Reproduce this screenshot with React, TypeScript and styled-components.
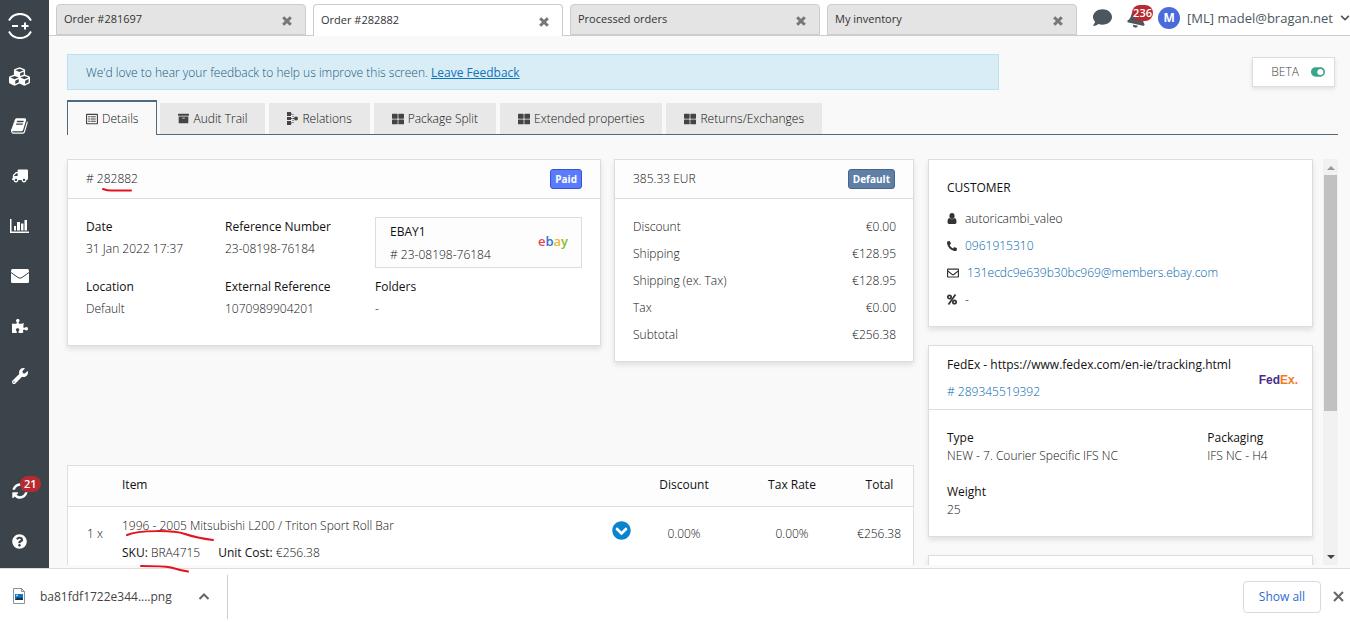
import React from "react";
import styled, { createGlobalStyle, css } from "styled-components";
import {
  FaArchive,
  FaBell,
  FaChevronCircleDown,
  FaChevronDown,
  FaComment,
  FaCubes,
  FaPhoneAlt,
  FaPuzzlePiece,
  FaQuestionCircle,
  FaRegEnvelope,
  FaRegListAlt,
  FaThLarge,
  FaToggleOn,
  FaTruck,
  FaWrench,
} from "react-icons/fa";

const GlobalStyle = createGlobalStyle`
  *, *::before, *::after { box-sizing: border-box; }
  body {
    margin: 0;
    background: #f9f9f9;
    color: #111;
    font: 300 12px/18px "Open Sans", "Noto Sans", sans-serif;
  }
  button { font: inherit; color: inherit; background: none; border: 0; padding: 0; cursor: pointer; }
  a { color: #0063ad; text-decoration: none; }
  svg { display: block; flex: none; }
`;

/* ---------- page frame ---------- */

const Page = styled.div`
  display: flex;
  flex-direction: column;
  height: 100vh;
  overflow: hidden;
`;

const Workspace = styled.div`
  display: flex;
  flex: 1;
  min-height: 0;
`;

const Sidebar = styled.nav`
  display: flex;
  flex-direction: column;
  justify-content: space-between;
  align-items: center;
  width: 49px;
  padding: 1px 10px 2px 0;
  background: #3a444a;
  color: #fff;
`;

const SideGroup = styled.div`
  display: flex;
  flex-direction: column;
`;

const SideButton = styled.button`
  position: relative;
  display: flex;
  align-items: center;
  justify-content: center;
  width: 39px;
  height: 50px;
`;

const CountBadge = styled.span`
  position: absolute;
  top: 10px;
  left: 20px;
  padding: 0 4px;
  border-radius: 8px;
  background: #b52b31;
  color: #fff;
  font-size: 11px;
  font-weight: 600;
  line-height: 16px;
`;

const Main = styled.div`
  display: flex;
  flex: 1;
  flex-direction: column;
  min-width: 0;
`;

/* ---------- top bar ---------- */

const TopBar = styled.header`
  display: flex;
  height: 36px;
  padding-left: 7px;
  border-bottom: 1px solid #ccc;
  background: #fff;
`;

const WindowTabs = styled.div`
  display: flex;
  flex: 0 1 1021px;
  gap: 7px;
  min-width: 0;
  padding-top: 4px;
`;

const WindowTab = styled.div<{ $active?: boolean }>`
  display: flex;
  flex: 1;
  align-items: center;
  justify-content: space-between;
  height: ${(p) => (p.$active ? 32 : 31)}px;
  padding: 0 13px 2px 7px;
  border: 1px solid #ccc;
  border-bottom-width: ${(p) => (p.$active ? 0 : 1)}px;
  border-radius: 4px 4px 0 0;
  background: ${(p) => (p.$active ? "#fff" : "#e4e4e4")};
  color: #333;
  font-size: 11px;
  font-weight: 400;
`;

const TabClose = styled.button`
  padding-top: 4px;
  color: #777;
`;

const Account = styled.div`
  display: flex;
  flex: 1;
  align-items: center;
  justify-content: flex-end;
  color: #4c565c;
  font-weight: 400;
`;

const IconButton = styled.button`
  position: relative;
  margin-right: 15px;
`;

const BellBadge = styled(CountBadge)`
  top: -3px;
  left: 5px;
  padding: 0 1px;
`;

const Avatar = styled.span`
  width: 22px;
  height: 22px;
  margin: 0 7px 0 -4px;
  border-radius: 50%;
  background: #4a6bdc;
  color: #fff;
  font-weight: 700;
  line-height: 22px;
  text-align: center;
`;

const AccountMenu = styled.button`
  display: flex;
  align-items: center;
  gap: 7px;
  font-size: 13px;
  white-space: nowrap;
`;

/* ---------- content ---------- */

const Content = styled.main`
  display: flex;
  flex: 1;
  flex-direction: column;
  min-height: 0;
  padding: 18px 12px 3px 18px;
`;

const NoticeRow = styled.div`
  display: flex;
  align-items: center;
  justify-content: space-between;
  padding-right: 3px;
`;

const Notice = styled.p`
  flex: 0 1 932px;
  margin: 0;
  padding: 9px 17px 7px 18px;
  border: 1px solid #bce0ee;
  background: #d9edf7;
  color: #1d5878;

  a { color: #0f74b8; font-weight: 400; text-decoration: underline; }
`;

const BetaSwitch = styled.button`
  display: flex;
  align-items: center;
  gap: 12px;
  height: 30px;
  padding: 0 9px 0 18px;
  border: 1px solid #ddd;
  background: #fff;
  box-shadow: 0 2px 4px rgba(0, 0, 0, 0.1);
  color: #444;

  svg { color: #3da58c; }
`;

const SectionTabs = styled.div`
  display: flex;
  align-items: flex-end;
  gap: 4px;
  height: 35px;
  margin-top: 10px;
  border-bottom: 1px solid #50697c;
`;

const SectionTab = styled.button<{ $active?: boolean }>`
  display: flex;
  align-items: center;
  gap: 4px;
  height: 31px;
  padding: 0 18px;
  background: #e8e8e8;
  white-space: nowrap;

  svg { color: #444; }

  ${(p) =>
    p.$active &&
    css`
      height: 35px;
      margin: 0 -1px -1px 0;
      border: 1px solid #50697c;
      border-top-width: 2px;
      border-bottom: 0;
      background: #f9f9f9;
    `}
`;

const Columns = styled.div`
  display: grid;
  grid-template-columns: minmax(0, 847fr) minmax(0, 410fr);
  grid-template-rows: minmax(0, 1fr);
  gap: 14px;
  flex: 1;
  min-height: 0;
  margin-top: 24px;
`;

const OrderColumn = styled.div`
  min-height: 0;
  margin: 0 -8px;
  padding: 0 8px;
  overflow: hidden;
`;

const SummaryRow = styled.div`
  display: grid;
  grid-template-columns: minmax(0, 534fr) minmax(0, 300fr);
  align-items: start;
  gap: 13px;
  min-height: 306px;
`;

const Card = styled.section`
  border: 1px solid #ddd;
  background: #fff;
  box-shadow: 0 3px 5px rgba(0, 0, 0, 0.1);
`;

const CardHeader = styled.header`
  display: flex;
  align-items: center;
  justify-content: space-between;
  height: 39px;
  padding: 0 18px;
  border-bottom: 1px solid #ddd;
  background: #fdfdfd;
`;

const Tag = styled.span<{ $tone: "paid" | "default" }>`
  padding: 0 4px;
  border: 1px solid ${(p) => (p.$tone === "paid" ? "#3353d8" : "#486488")};
  border-radius: 3px;
  background: ${(p) => (p.$tone === "paid" ? "#5b7cfa" : "#5e7fa6")};
  color: #fff;
  font-size: 10px;
  font-weight: 700;
  line-height: 18px;
`;

const Marked = styled.span`
  position: relative;
`;

const Stroke = styled.svg`
  position: absolute;
  overflow: visible;
  fill: none;
  stroke: #e3131f;
  stroke-width: 2;
  stroke-linecap: round;
  pointer-events: none;
`;

const FactGrid = styled.dl`
  display: grid;
  grid-template-columns: minmax(0, 139fr) minmax(0, 150fr) minmax(0, 207fr);
  row-gap: 9px;
  margin: 0;
  padding: 18px 18px 24px;
`;

const Fact = styled.div`
  dt { font-weight: 400; line-height: 20px; }
  dd { margin: 0; line-height: 24px; }
`;

const Channel = styled.div`
  display: flex;
  align-items: center;
  justify-content: space-between;
  height: 51px;
  padding: 0 13px 0 14px;
  border: 1px solid #ddd;
  background: #fdfdfd;
  line-height: 23px;

  strong { display: block; font-weight: 400; }
`;

const EbayLogo = styled.span`
  padding-bottom: 4px;
  font: 600 13px/18px "Open Sans", sans-serif;
`;

const Ink = styled.span<{ $color: string }>`
  color: ${(p) => p.$color};
`;

const Totals = styled.dl`
  margin: 0;
  padding: 14px 17px 13px 18px;

  div { display: flex; justify-content: space-between; line-height: 27px; }
  dd { margin: 0; }
`;

/* ---------- items ---------- */

const ItemsTable = styled.table`
  width: 100%;
  border: 1px solid #ddd;
  border-spacing: 0;
  background: #fff;
  table-layout: fixed;

  th {
    height: 41px;
    padding: 0 0 2px;
    border-bottom: 1px solid #ddd;
    background: #fdfdfd;
    font-weight: 400;
  }
  th:nth-child(2) { text-align: left; }
  td { height: 90px; padding: 13px 0 0; text-align: center; line-height: 27px; vertical-align: top; }
  td:nth-child(2) { padding-top: 5px; text-align: left; }
  td:last-child { padding-right: 12px; text-align: right; }
`;

const ItemMeta = styled.div`
  display: flex;
  gap: 18px;

  b { font-weight: 400; }
`;

const ExpandButton = styled.button`
  display: block;
  margin-top: 1px;
  color: #0a84cc;
`;

/* ---------- side panel ---------- */

const SidePanel = styled.aside`
  display: grid;
  grid-template-columns: minmax(0, 1fr) 15px;
  grid-template-rows: minmax(0, 1fr);
  gap: 10px;
  min-height: 0;
`;

const SideCards = styled.div`
  display: flex;
  flex-direction: column;
  gap: 18px;
  margin: 0 -8px;
  padding: 0 8px;
  overflow: hidden;
`;

const CustomerCard = styled(Card)`
  flex: none;
  padding: 14px 18px 13px;
  line-height: 27px;

  h2 { margin: 0 0 4px; font-size: 12px; font-weight: 400; }
`;

const ContactLine = styled.div`
  display: flex;
  align-items: center;
  gap: 8px;

  svg { min-width: 10px; color: #333; }
`;

const CourierCard = styled(Card)`
  flex: none;
`;

const CourierHeader = styled.header`
  display: flex;
  align-items: center;
  justify-content: space-between;
  padding: 5px 14px 4px 18px;
  border-bottom: 1px solid #ddd;
  font-weight: 400;
  line-height: 27px;

  a { display: block; font-weight: 300; }
`;

const FedexLogo = styled.span`
  padding-top: 4px;
  font: 700 12px/18px "Liberation Sans", sans-serif;
`;

const CourierFacts = styled.dl`
  display: grid;
  grid-template-columns: 3fr 1fr;
  row-gap: 18px;
  margin: 0;
  padding: 19px 18px 17px;

  dt { font-weight: 400; }
  dd { margin: 0; }
`;

const NextCard = styled(Card)`
  flex: none;
  height: 160px;
`;

const ScrollTrack = styled.div`
  display: flex;
  flex-direction: column;
  align-items: center;
  justify-content: space-between;
  padding: 7px 0 6px;
  background: #f1f1f1;
`;

const ScrollThumb = styled.div`
  width: 13px;
  height: 236px;
  margin-bottom: auto;
  margin-top: 5px;
  background: #c1c1c1;
`;

const ScrollArrow = styled.span<{ $down?: boolean }>`
  border: 4px solid transparent;
  ${(p) => (p.$down ? "border-top-color: #444; border-bottom: 0;" : "border-bottom-color: #999; border-top: 0;")}
`;

/* ---------- download shelf ---------- */

const DownloadShelf = styled.footer`
  position: relative;
  display: flex;
  align-items: center;
  justify-content: space-between;
  height: 54px;
  padding: 2px 6px 0 12px;
  border-top: 1px solid #ddd;
  background: #fff;
  color: #444;
  font-weight: 400;
`;

const DownloadItem = styled.div`
  display: flex;
  align-items: center;
  gap: 14px;
  height: 44px;
  padding-right: 18px;
  border-right: 1px solid #ccc;
`;

const ChevronButton = styled.button`
  margin-left: 13px;
`;

const ShelfActions = styled.div`
  display: flex;
  align-items: center;
  gap: 12px;
`;

const ShowAll = styled.button`
  width: 78px;
  height: 32px;
  border: 1px solid #d8dadd;
  border-radius: 4px;
  color: #2f6bd3;
`;

/* ---------- drawings ---------- */

const Logo = () => (
  <svg width="26" height="26" viewBox="0 0 26 26" fill="none" stroke="#fff" strokeWidth="2">
    <path d="M2 7.500a12.500 12.500 0 0 1 22 0M2 18.500a12.500 12.500 0 0 0 22 0M5 13h6M14.500 13h7M18 9.500v7" />
  </svg>
);

const BookIcon = () => (
  <svg width="18" height="18" viewBox="0 0 1792 1792" fill="currentColor">
    <path d="M1639 478q40 57 18 129l-275 906q-19 64-76.500 107.500t-122.500 43.500h-923q-77 0-148.500-53.500t-99.500-131.500q-24-67-2-127 0-4 3-27t4-37q1-8-3-21.500t-3-19.500q2-11 8-21t16.500-23.500 16.500-23.500q23-38 45-91.500t30-91.500q3-10 .5-30t-.5-28q3-11 17-28t17-23q21-36 42-92t25-90q1-9-2.500-32t.5-28q4-13 22-30.500t22-22.500q19-26 42.500-84.500t27.500-96.500q1-8-3-25.500t-2-26.500q2-8 9-18t18-23 17-21q8-12 16.500-30.500t15-35 16-36 19.500-32 26.500-23.500 36-11.500 47.500 5.500l-1 3q38-9 51-9h761q74 0 114 56t18 130l-274 906q-36 119-71.500 153.500t-128.500 34.500h-869q-27 0-38 15-11 16-1 43 24 70 144 70h923q29 0 56-15.500t35-41.500l300-987q7-22 5-57 38 15 59 43zm-1064 2q-4 13 2 22.500t20 9.500h608q13 0 25.500-9.500t16.500-22.500l21-64q4-13-2-22.500t-20-9.500h-608q-13 0-25.500 9.500t-16.500 22.500zm-83 256q-4 13 2 22.500t20 9.500h608q13 0 25.500-9.500t16.500-22.500l21-64q4-13-2-22.500t-20-9.500h-608q-13 0-25.500 9.500t-16.500 22.500z" />
  </svg>
);

const RefreshIcon = () => (
  <svg width="18" height="18" viewBox="0 0 1792 1792" fill="currentColor">
    <path d="M1639 1056q0 5-1 7-64 268-268 434.500t-478 166.500q-146 0-282.500-55t-243.500-157l-129 129q-19 19-45 19t-45-19-19-45v-448q0-26 19-45t45-19h448q26 0 45 19t19 45-19 45l-137 137q71 66 161 102t187 36q134 0 250-65t186-179q11-17 53-117 8-23 30-23h192q13 0 22.500 9.500t9.500 22.500zm25-800v448q0 26-19 45t-45 19h-448q-26 0-45-19t-19-45 19-45l138-138q-148-137-349-137-134 0-250 65t-186 179q-11 17-53 117-8 23-30 23h-199q-13 0-22.500-9.500t-9.500-22.500v-7q65-268 270-434.500t480-166.500q146 0 284 55.500t245 156.500l130-129q19-19 45-19t45 19 19 45z" />
  </svg>
);

const ChartIcon = () => (
  <svg width="19" height="15" viewBox="0 0 19 15" fill="currentColor">
    <path d="M0 0h1.500v12.500h17.500v1.500H0zM4 7h2v4.500H4zM7 3h3v8.500H7zM11 4.500h2.500v7h-2.500zM14.500 1h2.500v10.500h-2.500z" />
  </svg>
);

const MailIcon = () => (
  <svg width="18" height="14" viewBox="0 0 18 14">
    <rect width="18" height="14" rx="1.500" fill="#fff" />
    <path d="M0 3.500l7 5q2 1.500 4 0L18 3.500" fill="none" stroke="#3a444a" />
  </svg>
);

const CloseIcon = () => (
  <svg width="10" height="10" viewBox="0 0 10 10" stroke="currentColor" strokeWidth="3">
    <path d="M1.200 1.200l7.600 7.600M8.800 1.200l-7.600 7.600" />
  </svg>
);

const UserIcon = () => (
  <svg width="10" height="11" viewBox="0 0 10 11" fill="currentColor">
    <ellipse cx="5" cy="3" rx="2.600" ry="3" />
    <path d="M2.300 5Q5 7.500 7.700 5 9.500 5.500 9.500 9q0 2-1.500 2H2Q.5 11 .5 9q0-3.500 1.800-4z" />
  </svg>
);

const FlippedTruck = styled(FaTruck)`
  transform: scaleX(-1);
`;

const TiltedBell = styled(FaBell)`
  transform: rotate(12deg);
`;

const RelationsIcon = () => (
  <svg width="11" height="13" viewBox="0 0 11 13" fill="currentColor">
    <path d="M0 0h4v4H0zM0 5h4v3H0zM0 9h4v4H0z" />
    <circle cx="9" cy="6.500" r="2" />
    <path d="M4 2h2M4 6.500h4M4 11h2M6 2v9" stroke="currentColor" strokeDasharray="1 1" fill="none" />
  </svg>
);

const PercentIcon = () => (
  <svg width="10" height="11" viewBox="0 0 10 11" fill="none" stroke="currentColor" strokeWidth="1.700">
    <circle cx="2.500" cy="3" r="1.700" />
    <circle cx="7.500" cy="8" r="1.700" />
    <path d="M8.500 .5L1.500 10.500" />
  </svg>
);

const ImageFileIcon = () => (
  <svg width="14" height="17" viewBox="0 0 14 17">
    <path d="M1.500 .5h8l3 3v12h-11z" fill="#fff" stroke="#8a9199" />
    <path d="M9.500 .5v3h3" fill="none" stroke="#8a9199" />
    <path d="M3 6h8v6H3z" fill="#1673b8" />
    <path d="M3 12l3-3 2 1.500 1.500-1.500 1.500 1.500V12z" fill="#10324f" />
    <circle cx="5" cy="7.500" r="1" fill="#9fd8ff" />
  </svg>
);

/* ---------- data ---------- */

const windowTabs = ["Order #281697", "Order #282882", "Processed orders", "My inventory"];

const sections = [
  { label: "Details", icon: <FaRegListAlt size={12} /> },
  { label: "Audit Trail", icon: <FaArchive size={11} /> },
  { label: "Relations", icon: <RelationsIcon /> },
  { label: "Package Split", icon: <FaThLarge size={12} /> },
  { label: "Extended properties", icon: <FaThLarge size={12} /> },
  { label: "Returns/Exchanges", icon: <FaThLarge size={12} /> },
];

const navigation = [
  { label: "Home", icon: <Logo /> },
  { label: "Inventory", icon: <FaCubes size={21} /> },
  { label: "Orders", icon: <BookIcon /> },
  { label: "Shipping", icon: <FlippedTruck size={16} /> },
  { label: "Reports", icon: <ChartIcon /> },
  { label: "Email", icon: <MailIcon /> },
  { label: "Apps", icon: <FaPuzzlePiece size={16} /> },
  { label: "Settings", icon: <FaWrench size={16} /> },
];

const totals = [
  ["Discount", "€0.00"],
  ["Shipping", "€128.95"],
  ["Shipping (ex. Tax)", "€128.95"],
  ["Tax", "€0.00"],
  ["Subtotal", "€256.38"],
];

export default function App() {
  return (
    <Page>
      <GlobalStyle />
      <Workspace>
        <Sidebar>
          <SideGroup>
            {navigation.map((n) => (
              <SideButton key={n.label} aria-label={n.label}>{n.icon}</SideButton>
            ))}
          </SideGroup>
          <SideGroup>
            <SideButton aria-label="Sync">
              <RefreshIcon />
              <CountBadge>21</CountBadge>
            </SideButton>
            <SideButton aria-label="Help"><FaQuestionCircle size={15} /></SideButton>
          </SideGroup>
        </Sidebar>

        <Main>
          <TopBar>
            <WindowTabs>
              {windowTabs.map((t, i) => (
                <WindowTab key={t} $active={i === 1}>
                  {t}
                  <TabClose aria-label={`Close ${t}`}><CloseIcon /></TabClose>
                </WindowTab>
              ))}
            </WindowTabs>
            <Account>
              <IconButton aria-label="Messages"><FaComment size={19} /></IconButton>
              <IconButton aria-label="Notifications">
                <TiltedBell size={20} />
                <BellBadge>236</BellBadge>
              </IconButton>
              <Avatar>M</Avatar>
              <AccountMenu>[ML] madel@bragan.net<FaChevronDown size={10} /></AccountMenu>
            </Account>
          </TopBar>

          <Content>
            <NoticeRow>
              <Notice>
                We'd love to hear your feedback to help us improve this screen. <a href="#feedback">Leave Feedback</a>
              </Notice>
              <BetaSwitch>BETA<FaToggleOn size={14} /></BetaSwitch>
            </NoticeRow>

            <SectionTabs>
              {sections.map((s, i) => (
                <SectionTab key={s.label} $active={i === 0}>{s.icon}{s.label}</SectionTab>
              ))}
            </SectionTabs>

            <Columns>
              <OrderColumn>
                <SummaryRow>
                  <Card>
                    <CardHeader>
                      <Marked>
                        # 282882
                        <Stroke width="30" height="3" style={{ left: 17, top: 19 }}>
                          <path d="M0 0Q5 2 11 1.500H28" />
                        </Stroke>
                      </Marked>
                      <Tag $tone="paid">Paid</Tag>
                    </CardHeader>
                    <FactGrid>
                      <Fact><dt>Date</dt><dd>31 Jan 2022 17:37</dd></Fact>
                      <Fact><dt>Reference Number</dt><dd>23-08198-76184</dd></Fact>
                      <Channel>
                        <div><strong>EBAY1</strong># 23-08198-76184</div>
                        <EbayLogo>
                          <Ink $color="#e5404f">e</Ink><Ink $color="#2f72d8">b</Ink><Ink $color="#f0b43c">a</Ink><Ink $color="#8bbb2f">y</Ink>
                        </EbayLogo>
                      </Channel>
                      <Fact><dt>Location</dt><dd>Default</dd></Fact>
                      <Fact><dt>External Reference</dt><dd>1070989904201</dd></Fact>
                      <Fact><dt>Folders</dt><dd>-</dd></Fact>
                    </FactGrid>
                  </Card>

                  <Card>
                    <CardHeader>385.33 EUR<Tag $tone="default">Default</Tag></CardHeader>
                    <Totals>
                      {totals.map(([k, v]) => (
                        <div key={k}><dt>{k}</dt><dd>{v}</dd></div>
                      ))}
                    </Totals>
                  </Card>
                </SummaryRow>

                <ItemsTable>
                  <colgroup>
                    <col style={{ width: 54 }} />
                    <col />
                    <col style={{ width: 18 }} />
                    <col style={{ width: 108 }} />
                    <col style={{ width: 108 }} />
                    <col style={{ width: 67 }} />
                  </colgroup>
                  <thead>
                    <tr><th /><th>Item</th><th /><th>Discount</th><th>Tax Rate</th><th>Total</th></tr>
                  </thead>
                  <tbody>
                    <tr>
                      <td>1 x</td>
                      <td>
                        <Marked>
                          1996 - 2005 Mitsubishi L200 / Triton Sport Roll Bar
                          <Stroke width="88" height="12" style={{ left: 5, top: 14 }}>
                            <path d="M0 4C12 -1 46 -1 58 3Q70 7 86 9" />
                          </Stroke>
                        </Marked>
                        <ItemMeta>
                          <span><b>SKU:</b> BRA4715</span>
                          <span><b>Unit Cost:</b> €256.38</span>
                        </ItemMeta>
                      </td>
                      <td><ExpandButton aria-label="Expand item"><FaChevronCircleDown size={19} /></ExpandButton></td>
                      <td>0.00%</td>
                      <td>0.00%</td>
                      <td>€256.38</td>
                    </tr>
                  </tbody>
                </ItemsTable>
              </OrderColumn>

              <SidePanel>
                <SideCards>
                  <CustomerCard>
                    <h2>CUSTOMER</h2>
                    <ContactLine><UserIcon />autoricambi_valeo</ContactLine>
                    <ContactLine><FaPhoneAlt size={10} /><a href="tel:0961915310">0961915310</a></ContactLine>
                    <ContactLine>
                      <FaRegEnvelope size={12} />
                      <a href="mailto:131ecdc9e639b30bc969@members.ebay.com">131ecdc9e639b30bc969@members.ebay.com</a>
                    </ContactLine>
                    <ContactLine><PercentIcon />-</ContactLine>
                  </CustomerCard>
                  <CourierCard>
                    <CourierHeader>
                      <div>
                        FedEx - https://www.fedex.com/en-ie/tracking.html
                        <a href="#tracking"># 289345519392</a>
                      </div>
                      <FedexLogo>
                        <Ink $color="#4a2a8c">Fed</Ink><Ink $color="#f47a20">Ex.</Ink>
                      </FedexLogo>
                    </CourierHeader>
                    <CourierFacts>
                      <div><dt>Type</dt><dd>NEW - 7. Courier Specific IFS NC</dd></div>
                      <div><dt>Packaging</dt><dd>IFS NC - H4</dd></div>
                      <div><dt>Weight</dt><dd>25</dd></div>
                    </CourierFacts>
                  </CourierCard>
                  <NextCard />
                </SideCards>
                <ScrollTrack>
                  <ScrollArrow />
                  <ScrollThumb />
                  <ScrollArrow $down />
                </ScrollTrack>
              </SidePanel>
            </Columns>
          </Content>
        </Main>
      </Workspace>

      <DownloadShelf>
        <Stroke width="50" height="8" style={{ left: 141, top: -4 }}>
          <path d="M0 1Q22 1 30 2.500Q38 5 47 6.500" />
        </Stroke>
        <DownloadItem>
          <ImageFileIcon />
          ba81fdf1722e344....png
          <ChevronButton aria-label="Download options">
            <svg width="10" height="7" viewBox="0 0 10 7" fill="none" stroke="#666" strokeWidth="2">
              <path d="M.5 6L5 1.500 9.500 6" />
            </svg>
          </ChevronButton>
        </DownloadItem>
        <ShelfActions>
          <ShowAll>Show all</ShowAll>
          <button aria-label="Close downloads">
            <svg width="11" height="11" viewBox="0 0 11 11" stroke="#666" strokeWidth="2">
              <path d="M1 1l9 9M10 1l-9 9" />
            </svg>
          </button>
        </ShelfActions>
      </DownloadShelf>
    </Page>
  );
}
